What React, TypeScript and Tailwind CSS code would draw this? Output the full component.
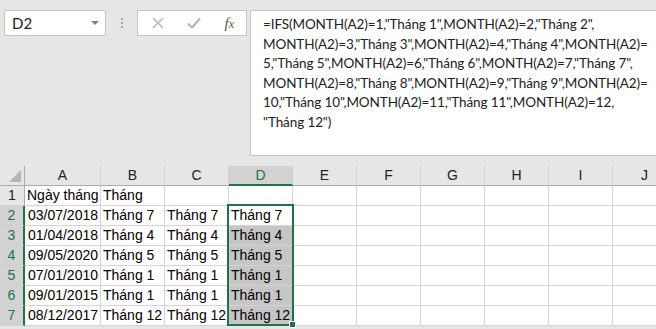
import React from "react";

const COLS = ["A", "B", "C", "D", "E", "F", "G", "H", "I", "J"];
const WIDTHS = ["w-[76px]", "w-[64px]", "w-[64px]", "w-[64px]", "w-[64px]", "w-[64px]", "w-[64px]", "w-[64px]", "w-[64px]", "w-[64px]"];

const ROWS: string[][] = [
  ["Ngày tháng", "Tháng", "", ""],
  ["03/07/2018", "Tháng 7", "Tháng 7", "Tháng 7"],
  ["01/04/2018", "Tháng 4", "Tháng 4", "Tháng 4"],
  ["09/05/2020", "Tháng 5", "Tháng 5", "Tháng 5"],
  ["07/01/2010", "Tháng 1", "Tháng 1", "Tháng 1"],
  ["09/01/2015", "Tháng 1", "Tháng 1", "Tháng 1"],
  ["08/12/2017", "Tháng 12", "Tháng 12", "Tháng 12"],
];

const FORMULA = [
  '=IFS(MONTH(A2)=1,"Tháng 1",MONTH(A2)=2,"Tháng 2",',
  'MONTH(A2)=3,"Tháng 3",MONTH(A2)=4,"Tháng 4",MONTH(A2)=',
  '5,"Tháng 5",MONTH(A2)=6,"Tháng 6",MONTH(A2)=7,"Tháng 7",',
  'MONTH(A2)=8,"Tháng 8",MONTH(A2)=9,"Tháng 9",MONTH(A2)=',
  '10,"Tháng 10",MONTH(A2)=11,"Tháng 11",MONTH(A2)=12,',
  '"Tháng 12")',
];

export default function App() {
  return (
    <div className="relative w-[656px] h-[329px] overflow-hidden bg-[#e6e6e6] font-['Liberation_Sans',sans-serif] text-[14px] text-black">
      {/* formula bar */}
      <div className="flex items-start pt-[10px] pl-[4px] font-['Lato',sans-serif]">
        <div className="shrink-0 w-[102px] h-[26px] bg-white border border-[#c6c6c6] flex items-center justify-between pl-[7px] pr-[6px]">
          <span className="text-[15px] text-[#222]">D2</span>
          <span className="w-0 h-0 border-l-[4px] border-r-[4px] border-t-[4px] border-l-transparent border-r-transparent border-t-[#808080]" />
        </div>
        <div className="shrink-0 w-[31px] h-[26px] flex flex-col items-center justify-center gap-[2px]">
          <span className="w-[2px] h-[2px] bg-[#a6a6a6]" />
          <span className="w-[2px] h-[2px] bg-[#a6a6a6]" />
          <span className="w-[2px] h-[2px] bg-[#a6a6a6]" />
        </div>
        <div className="shrink-0 w-[110px] h-[26px] bg-white border border-[#c6c6c6] flex items-center justify-between pl-[14px] pr-[12px]">
          <svg width="12" height="12" viewBox="0 0 12 12">
            <path d="M1 1 L11 11 M11 1 L1 11" stroke="#b3b3b3" strokeWidth="1.4" fill="none" />
          </svg>
          <svg width="14" height="12" viewBox="0 0 14 12">
            <path d="M1 6.5 L5 10.5 L13 1.5" stroke="#b3b3b3" strokeWidth="2" fill="none" />
          </svg>
          <span className="font-['Liberation_Serif',serif] italic text-[15px] text-[#555] leading-none">
            f<span className="text-[12px]">x</span>
          </span>
        </div>
        <div className="ml-[3px] flex-1 min-w-0 overflow-hidden h-[146px] bg-white border-l border-t border-b border-[#c6c6c6] pl-[12px] pt-[4px] leading-[19.5px] text-[13.5px] tracking-[-0.1px] text-[#222]">
          {FORMULA.map((line) => (
            <div key={line} className="whitespace-nowrap">
              {line}
            </div>
          ))}
        </div>
      </div>

      {/* grid */}
      <div className="mt-[10px] bg-white">
        <div className="flex h-[20px] bg-[#e6e6e6]">
          <div className="relative w-[25px] h-full border-r border-b border-[#ababab] shrink-0">
            <svg className="absolute right-[3px] bottom-[3px]" width="12" height="12" viewBox="0 0 12 12">
              <polygon points="12,0 12,12 0,12" fill="#b5b5b5" />
            </svg>
          </div>
          {COLS.map((c, i) => (
            <div
              key={c}
              className={`${WIDTHS[i]} shrink-0 h-full flex items-center justify-center border-r border-[#d0d0d0] ${
                c === "D"
                  ? "bg-[#d2d2d2] text-[#217346] border-b-2 border-b-[#217346]"
                  : "border-b border-b-[#ababab] text-[#222]"
              }`}
            >
              {c}
            </div>
          ))}
        </div>
        {ROWS.map((r, ri) => {
          const sel = ri > 0;
          return (
            <div key={ri} className="flex h-[20px]">
              <div
                className={`w-[25px] shrink-0 h-full flex items-center justify-center border-b border-[#d0d0d0] ${
                  sel
                    ? "bg-[#d2d2d2] text-[#217346] border-r-2 border-r-[#217346]"
                    : "bg-[#e6e6e6] border-r border-r-[#ababab] text-[#222]"
                }`}
              >
                {ri + 1}
              </div>
              {COLS.map((c, ci) => {
                const val = r[ci] ?? "";
                const grey = c === "D" && ri > 1;
                return (
                  <div
                    key={c}
                    className={`${WIDTHS[ci]} shrink-0 h-full border-r border-b border-[#d4d4d4] flex items-end pb-[1px] leading-[18px] whitespace-nowrap ${
                      ci === 0 && ri > 0 ? "justify-end pr-[2px]" : "pl-[2px]"
                    } ${grey ? "bg-[#c6c6c6]" : ""}`}
                  >
                    {val}
                  </div>
                );
              })}
            </div>
          );
        })}
      </div>

      {/* selection outline */}
      <div className="absolute left-[227px] top-[204px] w-[67px] h-[122px] border-2 border-[#217346]" />
      <div className="absolute left-[289px] top-[321px] w-[7px] h-[7px] bg-[#217346] border border-white" />
    </div>
  );
}
